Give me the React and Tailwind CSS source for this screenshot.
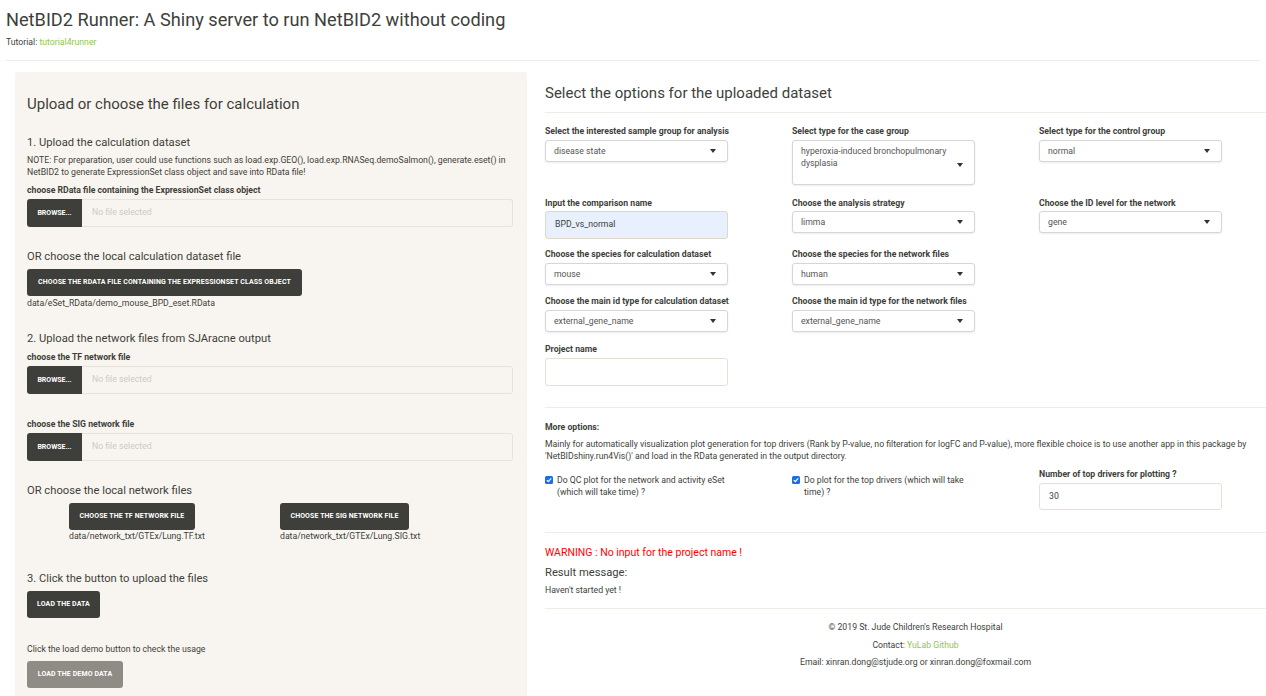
import React from 'react';

const dark = 'bg-[#3e3f3a]';

// small dark uppercase button, as in the sandstone theme
const Btn = ({ children, w, gray }) => (
  <div
    className={`${gray ? 'bg-[#8e8c84]' : dark} ${w} h-[27px] rounded-[3px] flex items-center justify-center text-white text-[7px] font-bold uppercase tracking-[0.1px]`}
  >
    {children}
  </div>
);

const FileInput = () => (
  <div className="flex h-[28px] w-[486px]">
    <div className={`${dark} w-[55px] rounded-l-[3px] flex items-center justify-center text-white text-[7px] font-bold`}>
      BROWSE...
    </div>
    <div className="flex-1 border border-[#e8e3da] border-l-0 rounded-r-[3px] bg-[#f8f5f0] flex items-center pl-[10px] text-[8.7px] text-[#cfcac1]">
      No file selected
    </div>
  </div>
);

const Caret = () => (
  <svg width="6" height="4" viewBox="0 0 6 4" className="shrink-0">
    <path d="M0 0 L6 0 L3 4 Z" fill="#333" />
  </svg>
);

const Select = ({ value, tall }) => (
  <div
    className={`w-[183px] ${tall ? 'h-[45px] items-start pt-[4px]' : 'h-[22px] items-center'} border border-[#d6d6d6] rounded-[3px] bg-white shadow-[0_1px_2px_rgba(0,0,0,0.08)] flex justify-between pl-[8px] pr-[11px] text-[8.7px] leading-[12px] text-[#555]`}
  >
    <span>{value}</span>
    <span className={tall ? 'self-center' : ''}>
      <Caret />
    </span>
  </div>
);

const Label = ({ children, className = '' }) => (
  <div className={`text-[8.7px] leading-[12px] font-bold text-[#3e3f3a] ${className}`}>{children}</div>
);

const Field = ({ label, children }) => (
  <div className="w-[247px]">
    <Label>{label}</Label>
    {children}
  </div>
);

const Check = ({ children }) => (
  <div className="flex items-start gap-[4px] text-[8.7px] leading-[12px] text-[#3e3f3a]">
    <svg width="8" height="8" viewBox="0 0 8 8" className="mt-[2px] shrink-0">
      <rect x="0" y="0" width="8" height="8" rx="1.5" fill="#1a6ee8" />
      <path d="M1.8 4.1 L3.3 5.6 L6.2 2.4" stroke="#fff" strokeWidth="1.2" fill="none" />
    </svg>
    <span>{children}</span>
  </div>
);

const Hr = ({ className = '' }) => <div className={`border-t border-[#f0ede7] ${className}`} />;

const LeftPanel = () => (
  <div className="w-[512px] shrink-0 h-[640px] bg-[#f8f5f0] rounded-[3px] px-[12px] pt-[22px] text-[#3e3f3a]">
    <h3 className="text-[15px] leading-[20px]">Upload or choose the files for calculation</h3>

    <h4 className="mt-[21px] text-[11.2px] leading-[16px]">1. Upload the calculation dataset</h4>
    <p className="mt-[3px] text-[8.7px] leading-[12px]">
      NOTE: For preparation, user could use functions such as load.exp.GEO(), load.exp.RNASeq.demoSalmon(), generate.eset() in
      <br />
      NetBID2 to generate ExpressionSet class object and save into RData file!
    </p>
    <Label className="mt-[6px]">choose RData file containing the ExpressionSet class object</Label>
    <div className="mt-[3px]">
      <FileInput />
    </div>

    <h4 className="mt-[22px] text-[11.2px] leading-[16px]">OR choose the local calculation dataset file</h4>
    <div className="mt-[4px]">
      <Btn w="w-[275px]">CHOOSE THE RDATA FILE CONTAINING THE EXPRESSIONSET CLASS OBJECT</Btn>
    </div>
    <div className="mt-[1px] text-[8.7px] leading-[12px]">data/eSet_RData/demo_mouse_BPD_eset.RData</div>

    <h4 className="mt-[22px] text-[11.2px] leading-[16px]">2. Upload the network files from SJAracne output</h4>
    <Label className="mt-[4px]">choose the TF network file</Label>
    <div className="mt-[3px]">
      <FileInput />
    </div>
    <Label className="mt-[24px]">choose the SIG network file</Label>
    <div className="mt-[3px]">
      <FileInput />
    </div>

    <h4 className="mt-[22px] text-[11.2px] leading-[16px]">OR choose the local network files</h4>
    <div className="mt-[4px] flex">
      <div className="ml-[42px] w-[211px]">
        <Btn w="w-[126px]">CHOOSE THE TF NETWORK FILE</Btn>
        <div className="text-[8.7px] leading-[12px]">data/network_txt/GTEx/Lung.TF.txt</div>
      </div>
      <div>
        <Btn w="w-[129px]">CHOOSE THE SIG NETWORK FILE</Btn>
        <div className="text-[8.7px] leading-[12px]">data/network_txt/GTEx/Lung.SIG.txt</div>
      </div>
    </div>

    <h4 className="mt-[29px] text-[11.2px] leading-[16px]">3. Click the button to upload the files</h4>
    <div className="mt-[4px]">
      <Btn w="w-[73px]">LOAD THE DATA</Btn>
    </div>
    <div className="mt-[25px] text-[8.7px] leading-[12px]">Click the load demo button to check the usage</div>
    <div className="mt-[6px]">
      <Btn w="w-[96px]" gray>
        LOAD THE DEMO DATA
      </Btn>
    </div>
  </div>
);

const RightPanel = () => (
  <div className="flex-1 pt-[11px] pr-[4px] text-[#3e3f3a]">
    <h3 className="text-[15px] leading-[20px]">Select the options for the uploaded dataset</h3>
    <Hr className="mt-[9px]" />

    <div className="mt-[12px] flex">
      <Field label="Select the interested sample group for analysis">
        <div className="mt-[3px]">
          <Select value="disease state" />
        </div>
      </Field>
      <Field label="Select type for the case group">
        <div className="mt-[3px]">
          <Select
            tall
            value={
              <>
                hyperoxia-induced bronchopulmonary
                <br />
                dysplasia
              </>
            }
          />
        </div>
      </Field>
      <Field label="Select type for the control group">
        <div className="mt-[3px]">
          <Select value="normal" />
        </div>
      </Field>
    </div>

    <div className="mt-[12px] flex">
      <Field label="Input the comparison name">
        <div className="mt-[2px] w-[183px] h-[28px] border border-[#dfd7ca] rounded-[3px] bg-[#e8f0fe] flex items-center pl-[9px] text-[8.7px] text-[#3e3f3a]">
          BPD_vs_normal
        </div>
      </Field>
      <Field label="Choose the analysis strategy">
        <div className="mt-[2px]">
          <Select value="limma" />
        </div>
      </Field>
      <Field label="Choose the ID level for the network">
        <div className="mt-[2px]">
          <Select value="gene" />
        </div>
      </Field>
    </div>

    <div className="mt-[9px] flex">
      <Field label="Choose the species for calculation dataset">
        <div className="mt-[3px]">
          <Select value="mouse" />
        </div>
      </Field>
      <Field label="Choose the species for the network files">
        <div className="mt-[3px]">
          <Select value="human" />
        </div>
      </Field>
    </div>

    <div className="mt-[10px] flex">
      <Field label="Choose the main id type for calculation dataset">
        <div className="mt-[3px]">
          <Select value="external_gene_name" />
        </div>
      </Field>
      <Field label="Choose the main id type for the network files">
        <div className="mt-[3px]">
          <Select value="external_gene_name" />
        </div>
      </Field>
    </div>

    <div className="mt-[11px]">
      <Label>Project name</Label>
      <div className="mt-[3px] w-[183px] h-[28px] border border-[#e6e0d6] rounded-[3px] bg-white" />
    </div>

    <Hr className="mt-[21px]" />

    <Label className="mt-[13px]">More options:</Label>
    <p className="mt-[5px] text-[8.7px] leading-[12px] whitespace-nowrap">
      Mainly for automatically visualization plot generation for top drivers (Rank by P-value, no filteration for logFC and P-value), more flexible choice is to use another app in this package by
      <br />
      'NetBIDshiny.run4Vis()' and load in the RData generated in the output directory.
    </p>

    <div className="mt-[6px] flex">
      <div className="w-[247px] pt-[6px]">
        <Check>
          Do QC plot for the network and activity eSet
          <br />
          (which will take time) ?
        </Check>
      </div>
      <div className="w-[247px] pt-[6px]">
        <Check>
          Do plot for the top drivers (which will take
          <br />
          time) ?
        </Check>
      </div>
      <div className="w-[247px]">
        <Label>Number of top drivers for plotting ?</Label>
        <div className="mt-[3px] w-[183px] h-[27px] border border-[#e6e0d6] rounded-[3px] bg-white flex items-center pl-[9px] text-[8.7px]">
          30
        </div>
      </div>
    </div>

    <Hr className="mt-[22px]" />

    <div className="mt-[13px] text-[10.5px] leading-[14px] text-[#ff0000]">WARNING : No input for the project name !</div>
    <div className="mt-[5px] text-[11.2px] leading-[16px]">Result message:</div>
    <div className="mt-[3px] text-[8.7px] leading-[12px]">Haven't started yet !</div>

    <Hr className="mt-[12px]" />

    <div className="mt-[12px] text-center text-[8.7px] leading-[12px]">
      <div>© 2019 St. Jude Children's Research Hospital</div>
      <div className="mt-[6px]">
        Contact: <span className="text-[#93c54b]">YuLab Github</span>
      </div>
      <div className="mt-[5px]">Email: xinran.dong@stjude.org or xinran.dong@foxmail.com</div>
    </div>
  </div>
);

export default function App() {
  return (
    <div
      className="w-[1266px] h-[696px] overflow-hidden bg-white text-[#3e3f3a]"
      style={{ fontFamily: 'Roboto, "Liberation Sans", sans-serif' }}
    >
      <div className="px-[6px] pt-[8px]">
        <h1 className="text-[18.2px] leading-[24px]">NetBID2 Runner: A Shiny server to run NetBID2 without coding</h1>
        <div className="mt-[4px] text-[8.7px] leading-[12px]">
          Tutorial: <span className="text-[#93c54b]">tutorial4runner</span>
        </div>
        <Hr className="mt-[12px]" />
      </div>
      <div className="mt-[11px] pl-[15px] flex gap-[18px]">
        <LeftPanel />
        <RightPanel />
      </div>
    </div>
  );
}
